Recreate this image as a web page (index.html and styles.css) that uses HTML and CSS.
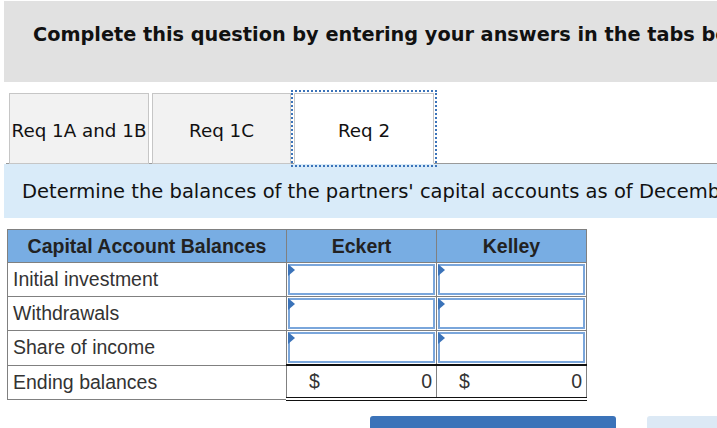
FILE: index.html
```html
<!DOCTYPE html>
<html>
<head>
<meta charset="utf-8">
<link rel="stylesheet" href="styles.css">
</head>
<body>
<div class="banner"><span class="banner-text">Complete this question by entering your answers in the tabs below.</span></div>
<div class="tabs">
  <div class="tab">Req 1A and 1B</div>
  <div class="tab">Req 1C</div>
  <div class="tab active">Req 2</div>
</div>
<div class="info">Determine the balances of the partners' capital accounts as of December 31, Year 2.</div>
<table class="grid">
  <colgroup><col class="c1"><col class="c2"><col class="c3"></colgroup>
  <thead>
    <tr><th>Capital Account Balances</th><th>Eckert</th><th>Kelley</th></tr>
  </thead>
  <tbody>
    <tr><td class="label">Initial investment</td><td class="inp"><div class="box"></div></td><td class="inp"><div class="box"></div></td></tr>
    <tr><td class="label">Withdrawals</td><td class="inp"><div class="box"></div></td><td class="inp"><div class="box"></div></td></tr>
    <tr><td class="label">Share of income</td><td class="inp"><div class="box"></div></td><td class="inp"><div class="box"></div></td></tr>
    <tr class="total"><td class="label">Ending balances</td><td class="val"><span class="cur">$</span><span class="num">0</span></td><td class="val"><span class="cur">$</span><span class="num">0</span></td></tr>
  </tbody>
</table>
<div class="buttons">
  <div class="btn primary"></div>
  <div class="btn secondary"></div>
</div>
</body>
</html>
```
FILE: styles.css
```css
html, body {
  margin: 0;
  padding: 0;
  background: #ffffff;
  overflow: hidden;
}
body {
  width: 717px;
  height: 428px;
  font-family: "DejaVu Sans", Verdana, sans-serif;
  color: #1a1a1a;
}
.banner {
  box-sizing: border-box;
  margin: 1px 0 0 4px;
  height: 81px;
  background: #e1e1e1;
  padding: 22px 0 0 29px;
  white-space: nowrap;
  overflow: hidden;
}
.banner-text {
  font-weight: bold;
  font-size: 19.3px;
  line-height: 23px;
  color: #111;
}
.tabs {
  margin: 11px 0 0 6px;
  padding-left: 3px;
  display: flex;
  gap: 3px;
  border-bottom: 1px solid #9a9a9a;
  height: 70px;
}
.tab {
  box-sizing: border-box;
  flex-shrink: 0;
  height: 71px;
  margin-bottom: -1px;
  width: 140px;
  background: #f2f2f2;
  border: 1px solid #c6c6c6;
  display: flex;
  align-items: center;
  justify-content: center;
  font-size: 18.3px;
  color: #111;
  white-space: nowrap;
  padding-top: 3px;
}
.tab:nth-child(2) { width: 139px; }
.tab.active {
  width: 140px;
  background: #ffffff;
  border-bottom-color: #ffffff;
  outline: 2px dotted #3b73b9;
  outline-offset: 1px;
}
.info {
  margin-left: 4px;
  height: 54px;
  background: #d9ebf9;
  display: flex;
  align-items: center;
  padding-left: 18px;
  white-space: nowrap;
  overflow: hidden;
  font-size: 19.5px;
  color: #111;
}
.grid {
  margin: 11px 0 0 7px;
  border-collapse: collapse;
  table-layout: fixed;
  width: 580px;
  font-family: "Liberation Sans", Arial, sans-serif;
  font-size: 19.5px;
}
.c1 { width: 279px; }
.c2 { width: 150px; }
.c3 { width: 150px; }
.grid th {
  background: #78ade3;
  border: 1px solid #808080;
  height: 32px;
  font-weight: bold;
  color: #222;
  padding: 0;
  font-size: 19.5px;
}
.grid td {
  border: 1px solid #808080;
  height: 31px;
  padding: 0;
  color: #333;
}
.grid td.label {
  padding-left: 5px;
}
.grid td.inp {
  padding: 1px;
}
.box {
  box-sizing: border-box;
  height: 31px;
  border: 2px solid #7aa6db;
  background: #ffffff;
  position: relative;
}
.box::before {
  content: "";
  position: absolute;
  left: -2px;
  top: -2px;
  border-left: 7px solid #3b73b9;
  border-top: 6px solid transparent;
  border-bottom: 6px solid transparent;
}
.total td.val {
  border-top: 2px solid #111;
  border-bottom: 4px double #111;
  padding: 0 4px 0 22px;
}
.val {
  white-space: nowrap;
}
.val .cur { float: left; }
.val .num { float: right; }
.buttons {
  display: flex;
  margin: 15px 0 0 370px;
  gap: 31px;
}
.btn {
  flex-shrink: 0;
  height: 20px;
  border-radius: 3px;
}
.btn.primary {
  width: 246px;
  background: #3b73b9;
}
.btn.secondary {
  width: 90px;
  background: #dce9f5;
}
```
